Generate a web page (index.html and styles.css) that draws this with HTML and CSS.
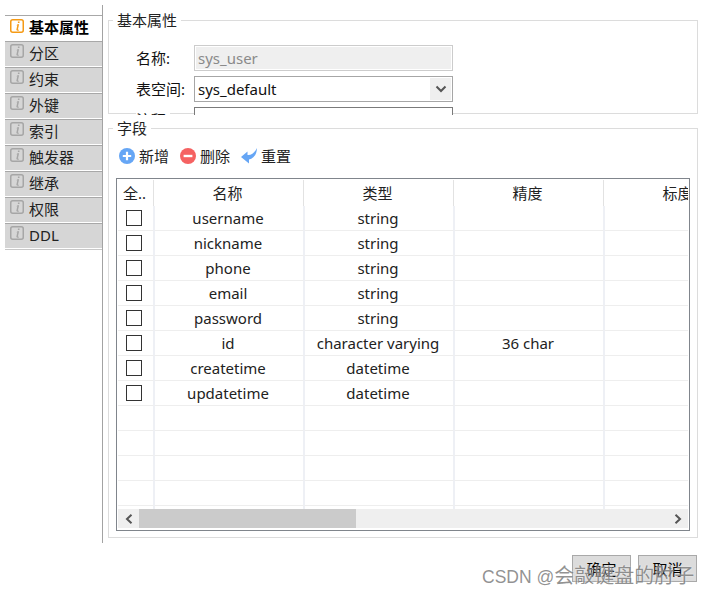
FILE: index.html
```html
<!DOCTYPE html>
<html lang="zh">
<head>
<meta charset="utf-8">
<title>基本属性</title>
<link rel="stylesheet" href="styles.css">
</head>
<body>
<svg class="defs" width="0" height="0" aria-hidden="true">
  <symbol id="info" viewBox="0 0 14 14">
    <rect x=".75" y=".75" width="12.5" height="12.5" rx="2" fill="none" stroke="currentColor" stroke-width="1.5"/>
    <path d="M7.9 2.6h1.6v1.5H7.9zM7.4 5.3h1.7L7.9 10.4c-.1.4.2.5 1 .2v.8c-1.6.6-2.7.3-2.5-.9l.9-4.2-.9.1z" fill="currentColor"/>
  </symbol>
</svg>
<div class="app">
  <nav class="sidebar">
    <ul class="tabs">
      <li class="tab tab-active"><svg class="tab-icon"><use href="#info"/></svg><span>基本属性</span></li>
      <li class="tab"><svg class="tab-icon"><use href="#info"/></svg><span>分区</span></li>
      <li class="tab"><svg class="tab-icon"><use href="#info"/></svg><span>约束</span></li>
      <li class="tab"><svg class="tab-icon"><use href="#info"/></svg><span>外键</span></li>
      <li class="tab"><svg class="tab-icon"><use href="#info"/></svg><span>索引</span></li>
      <li class="tab"><svg class="tab-icon"><use href="#info"/></svg><span>触发器</span></li>
      <li class="tab"><svg class="tab-icon"><use href="#info"/></svg><span>继承</span></li>
      <li class="tab"><svg class="tab-icon"><use href="#info"/></svg><span>权限</span></li>
      <li class="tab"><svg class="tab-icon"><use href="#info"/></svg><span>DDL</span></li>
    </ul>
  </nav>
  <main class="main">
    <fieldset class="group group-basic">
      <legend class="group-title">基本属性</legend>
      <div class="form">
        <span class="form-label"><span class="form-text">名称:</span></span>
        <div class="field field-disabled"><div class="field-fill">sys_user</div></div>
        <span class="form-label"><span class="form-text">表空间:</span></span>
        <div class="field field-select">
          <div class="field-value">sys_default</div>
          <div class="select-arrow">
            <svg width="12" height="8" viewBox="0 0 12 8"><path d="M1.5 1.5 6 6l4.5-4.5" fill="none" stroke="#555" stroke-width="2"/></svg>
          </div>
        </div>
        <span class="form-label"><span class="form-text">注释:</span></span>
        <div class="field field-plain"></div>
      </div>
    </fieldset>
    <fieldset class="group group-columns">
      <legend class="group-title">字段</legend>
      <div class="toolbar">
        <span class="tool">
          <svg width="16" height="16" viewBox="0 0 16 16"><circle cx="8" cy="8" r="8" fill="#66a6f5"/><path d="M8 3.8v8.4M3.8 8h8.4" stroke="#fff" stroke-width="2.2"/></svg>
          新增
        </span>
        <span class="tool">
          <svg width="16" height="16" viewBox="0 0 16 16"><circle cx="8" cy="8" r="8" fill="#f56262"/><path d="M3.6 8h8.8" stroke="#fff" stroke-width="2.4"/></svg>
          删除
        </span>
        <span class="tool">
          <svg width="16" height="16" viewBox="0 0 16 16"><path d="M16 0C15.800 6 13 10.500 8 11.500V15.500L0 9 6.500 3.500V7C10 7.500 13.500 5 16 0z" fill="#66a6f5"/></svg>
          重置
        </span>
      </div>
      <div class="grid-box">
        <div class="grid-view">
          <table class="grid">
            <colgroup><col class="col-check"><col class="col-data"><col class="col-data"><col class="col-data"><col class="col-data"></colgroup>
            <thead>
              <tr><th>全..</th><th>名称</th><th>类型</th><th>精度</th><th>标度</th></tr>
            </thead>
            <tbody>
              <tr><td><span class="check"></span></td><td>username</td><td>string</td><td></td><td></td></tr>
              <tr><td><span class="check"></span></td><td>nickname</td><td>string</td><td></td><td></td></tr>
              <tr><td><span class="check"></span></td><td>phone</td><td>string</td><td></td><td></td></tr>
              <tr><td><span class="check"></span></td><td>email</td><td>string</td><td></td><td></td></tr>
              <tr><td><span class="check"></span></td><td>password</td><td>string</td><td></td><td></td></tr>
              <tr><td><span class="check"></span></td><td>id</td><td>character varying</td><td>36 char</td><td></td></tr>
              <tr><td><span class="check"></span></td><td>createtime</td><td>datetime</td><td></td><td></td></tr>
              <tr><td><span class="check"></span></td><td>updatetime</td><td>datetime</td><td></td><td></td></tr>
              <tr><td></td><td></td><td></td><td></td><td></td></tr>
              <tr><td></td><td></td><td></td><td></td><td></td></tr>
              <tr><td></td><td></td><td></td><td></td><td></td></tr>
              <tr><td></td><td></td><td></td><td></td><td></td></tr>
              <tr><td></td><td></td><td></td><td></td><td></td></tr>
            </tbody>
          </table>
        </div>
        <div class="scrollbar">
          <span class="scroll-btn"><svg width="8" height="10" viewBox="0 0 8 10"><path d="M6.500 .8 2 5l4.500 4.200" fill="none" stroke="#555" stroke-width="2"/></svg></span>
          <span class="scroll-thumb"></span>
          <span class="scroll-rest"></span>
          <span class="scroll-btn"><svg width="8" height="10" viewBox="0 0 8 10"><path d="M1.500 .8 6 5 1.500 9.200" fill="none" stroke="#555" stroke-width="2"/></svg></span>
        </div>
      </div>
    </fieldset>
    <div class="actions">
      <button class="btn" type="button">确定</button>
      <button class="btn" type="button">取消</button>
    </div>
  </main>
</div>
<div class="watermark"><span class="wm-latin">CSDN @</span><span class="wm-cjk">会敲键盘的肘子</span></div>
</body>
</html>
```
FILE: styles.css
```css
* { box-sizing: border-box; }
html, body { margin: 0; padding: 0; background: #fff; }
body {
  width: 708px;
  height: 594px;
  overflow: hidden;
  position: relative;
  font-family: "Noto Sans", "Noto Sans CJK SC", sans-serif;
  font-size: 15px;
  color: #111;
}
.defs { position: absolute; }
.app { display: flex; padding: 5px 0 0 5px; gap: 5px; }

.sidebar {
  width: 98px;
  height: 538px;
  padding-top: 10px;
  border-right: 1px solid #a3a3a3;
}
.tabs { list-style: none; margin: 0; padding: 0; border-top: 1px solid #a8a8a8; }
.tab {
  height: 26px;
  display: flex;
  align-items: center;
  gap: 5px;
  padding: 0 0 3px 5px;
  background: #d6d6d6;
  border-top: 1px solid #a8a8a8;
  border-bottom: 1px solid #fff;
  line-height: 20px;
  color: #222;
}
.tab-icon { width: 14px; height: 14px; color: #a6a6a6; flex: none; margin-top: -3px; }
.tab-active {
  height: 25px;
  background: #fff;
  border: 0;
  font-weight: 700;
  color: #000;
}
.tab-active .tab-icon { color: #f59a14; }
.tab:last-child { box-shadow: 0 1px 0 #c8c8c8; }

.main { width: 590px; padding-top: 5px; display: flex; flex-direction: column; }
.group {
  margin: 0;
  padding: 0;
  min-width: 0;
  border: 1px solid #dcdcdc;
}
.group-title { margin-left: 4px; padding: 0 4px; line-height: 20px; color: #222; }
.group-basic { height: 104px; margin-bottom: 4px; }
.form {
  height: 85px;
  overflow: hidden;
  padding: 15px 0 0 27px;
  display: grid;
  grid-template-columns: 58px 259px;
  grid-auto-rows: 26px;
  row-gap: 5px;
}
.form-label { line-height: 26px; }
.form-text { background: #fff; }
.field { height: 26px; line-height: 24px; border: 1px solid #a6a6a6; background: #fff; }
.field-disabled { border-color: #ccc; padding: 1px; }
.field-fill { height: 22px; line-height: 22px; background: #efefef; color: #8a8a8a; padding-left: 2px; }
.field-select { display: flex; justify-content: space-between; padding: 1px; line-height: 22px; }
.field-value { padding-left: 2px; color: #111; }
.select-arrow {
  width: 21px;
  background: #efefef;
  display: flex;
  align-items: center;
  justify-content: center;
}
.field-plain { border-color: #7a7a7a; }

.group-columns { padding: 0 7px 6px; }
.group-columns .group-title { margin-left: -3px; }
.toolbar { display: flex; gap: 11px; height: 20px; margin: 8px 0 12px; padding-left: 3px; }
.tool { display: flex; align-items: center; gap: 4px; line-height: 20px; color: #222; }
.tool svg { flex: none; }

.grid-box {
  width: 574px;
  height: 353px;
  border: 1px solid #80858c;
  padding: 1px 1px 1px;
  display: flex;
  flex-direction: column;
}
.grid-view { flex: 1; min-height: 0; overflow: hidden; }
.grid { table-layout: fixed; width: 636px; border-collapse: separate; border-spacing: 0; }
.col-check { width: 36px; }
.col-data { width: 150px; }
.grid th {
  height: 26px;
  padding: 0 2px 2px 0;
  font-weight: 400;
  color: #222;
  text-align: center;
  white-space: nowrap;
  overflow: hidden;
  border-right: 1px solid #e2e2e2;
  border-bottom: 0;
}
.grid td {
  height: 25px;
  padding: 0;
  text-align: center;
  color: #222;
  line-height: 24px;
  border-bottom: 1px solid #eeeeee;
  border-right: 1px solid #eef0f5;
}
.grid td + td { border-left: 1px solid #eef0f5; padding-right: 2px; }
.check {
  display: block;
  width: 16px;
  height: 16px;
  margin-left: 8px;
  border: 1px solid #333;
  background: #fff;
}
.scrollbar { display: flex; flex: none; height: 19px; margin-bottom: 1px; background: #efefef; }
.scroll-btn { width: 21px; display: flex; align-items: center; justify-content: center; }
.scroll-thumb { width: 217px; background: #cbcbcb; }
.scroll-rest { flex: 1; }

.actions { display: flex; justify-content: flex-end; gap: 7px; margin: 17px 1px 0 0; }
.btn {
  width: 59px;
  height: 27px;
  padding: 0;
  font: inherit;
  color: #000;
  background: #dcdcdc;
  border: 1px solid #a9a9a9;
}
.watermark {
  position: absolute;
  left: 482px;
  top: 562px;
  white-space: nowrap;
  line-height: 26px;
  color: rgba(110, 110, 110, .75);
  text-shadow: 0 0 2px rgba(255, 255, 255, .8);
}
.wm-latin { font: 17.5px/26px "Liberation Sans", sans-serif; }
.wm-cjk { font: 20px/26px "Noto Sans CJK SC", sans-serif; }
```
